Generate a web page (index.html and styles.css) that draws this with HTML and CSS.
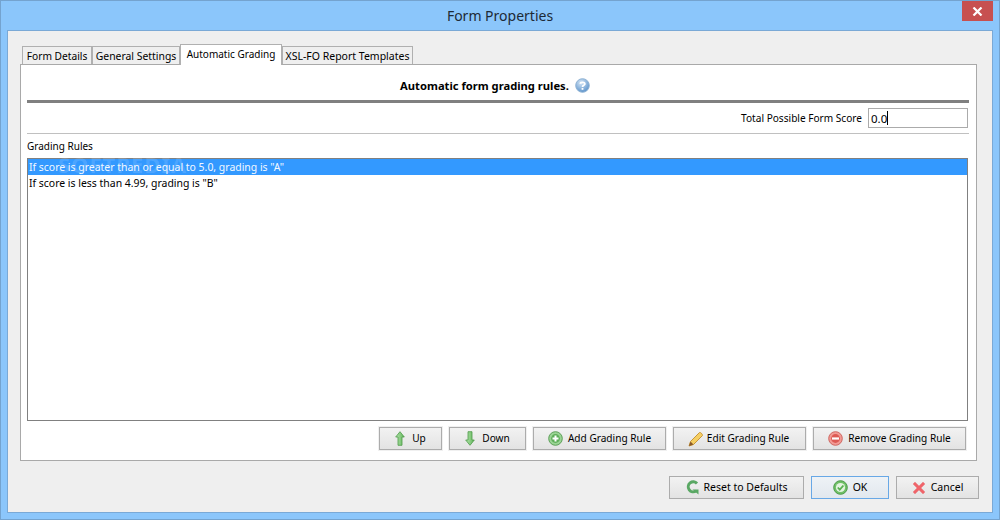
FILE: index.html
```html
<!DOCTYPE html>
<html lang="en">
<head>
<meta charset="utf-8">
<title>Form Properties</title>
<link rel="stylesheet" href="styles.css">
</head>
<body>
<div class="window">
  <header class="titlebar">
    <span class="title">Form Properties</span>
    <span class="close"><svg width="11" height="9" viewBox="0 0 11 9"><path d="M1.500 .5L9.500 8.500M9.500 .5L1.500 8.500" stroke="#fff" stroke-width="2.200" fill="none"/></svg></span>
  </header>
  <main class="client">
    <nav class="tabs">
      <div class="tab t-form">Form Details</div>
      <div class="tab t-general">General Settings</div>
      <div class="tab active">Automatic Grading</div>
      <div class="tab t-xsl">XSL-FO Report Templates</div>
    </nav>
    <section class="panel">
      <div class="heading">
        <strong>Automatic form grading rules.</strong>
        <svg class="help" width="15" height="15" viewBox="0 0 15 15"><defs><radialGradient id="hg" cx=".4" cy=".3" r=".8"><stop offset="0" stop-color="#d5e6f6"/><stop offset="1" stop-color="#4f8ac6"/></radialGradient></defs><circle cx="7.500" cy="7.500" r="6.800" fill="url(#hg)" stroke="#8fb2d4"/><path d="M5.300 5.800C5.400 3.900 9.900 3.800 9.900 6C9.900 7.400 7.500 7.300 7.500 9" fill="none" stroke="#fff" stroke-width="1.700"/><rect x="6.600" y="10" width="1.800" height="1.800" fill="#fff"/></svg>
      </div>
      <div class="rule-heavy"></div>
      <div class="score-row">
        <label class="score-label">Total Possible Form Score</label>
        <div class="score-input">0.0<span class="caret"></span></div>
      </div>
      <div class="rule-light"></div>
      <div class="list-label">Grading Rules</div>
      <div class="list">
        <div class="row selected">If score is greater than or equal to 5.0, grading is "A"<span class="watermark">SOFTPEDIA</span></div>
        <div class="row">If score is less than 4.99, grading is "B"</div>
      </div>
      <div class="actions">
        <button class="btn w-up"><svg width="10" height="15" viewBox="0 0 10 15"><defs><linearGradient id="ag" x1="0" x2="1" y1="0" y2="0"><stop offset="0" stop-color="#b5e6ae"/><stop offset="1" stop-color="#5fb358"/></linearGradient></defs><path d="M5 .7L9.300 6H7V14.300H3V6H.7Z" fill="url(#ag)" stroke="#4c9a48" stroke-width=".8"/></svg>Up</button>
        <button class="btn w-down"><svg width="10" height="15" viewBox="0 0 10 15"><path d="M5 14.300L9.300 9H7V.7H3V9H.7Z" fill="url(#ag)" stroke="#4c9a48" stroke-width=".8"/></svg>Down</button>
        <button class="btn w-add"><svg width="15" height="15" viewBox="0 0 15 15"><circle cx="7.500" cy="7.500" r="6.800" fill="#9ad494" stroke="#5c9f58"/><circle cx="7.500" cy="7.500" r="4.400" fill="#5fae5a"/><path d="M7.500 4.500V10.500M4.500 7.500H10.500" stroke="#fff" stroke-width="2"/></svg>Add Grading Rule</button>
        <button class="btn w-edit"><svg width="16" height="16" viewBox="0 0 16 16"><path d="M1 15L2.500 10.500L11.500 1.500C12.500 1 14.500 3 14.500 4.500L5.500 13.500Z" fill="#f5cf63" stroke="#c8963a"/><path d="M1 15L2.500 10.500L5.500 13.500Z" fill="#8a5a2b"/></svg>Edit Grading Rule</button>
        <button class="btn w-remove"><svg width="15" height="15" viewBox="0 0 15 15"><circle cx="7.500" cy="7.500" r="6.800" fill="#f29a94" stroke="#cf6660"/><circle cx="7.500" cy="7.500" r="4.400" fill="#dd5a54"/><path d="M4 7.500H11" stroke="#fff" stroke-width="2.200"/></svg>Remove Grading Rule</button>
      </div>
    </section>
    <footer class="footer">
      <button class="btn w-reset"><svg width="13" height="15" viewBox="0 0 13 15"><path d="M11 3.500A5 5 0 1 0 10 11" fill="none" stroke="#5aa864" stroke-width="3"/><path d="M6.500 9.500H12.500V14.500Z" fill="#5aa864"/></svg>Reset to Defaults</button>
      <button class="btn w-ok default"><svg width="15" height="15" viewBox="0 0 15 15"><circle cx="7.500" cy="7.500" r="6.800" fill="#6fc067" stroke="#4c9a48"/><circle cx="7.500" cy="7.500" r="4.600" fill="#e3f3e0"/><path d="M4.800 7.500L6.800 9.700L10.400 5.500" fill="none" stroke="#5ab053" stroke-width="1.800"/></svg>OK</button>
      <button class="btn w-cancel"><svg width="14" height="14" viewBox="0 0 14 14"><path d="M1 3L3 1L7 5L11 1L13 3L9 7L13 11L11 13L7 9L3 13L1 11L5 7Z" fill="#f0646a" stroke="#e8888c" stroke-width=".6"/></svg>Cancel</button>
    </footer>
  </main>
</div>
</body>
</html>
```

FILE: styles.css
```css
* { box-sizing: border-box; }
html, body { margin: 0; padding: 0; }
body { width: 1000px; height: 520px; overflow: hidden; font-family: "Noto Sans", "Liberation Sans", sans-serif; font-size: 10.5px; color: #000; }
.window { width: 1000px; height: 520px; background: #8bc6fb; border: 1px solid #74a3cf; padding: 0 6px 6px; display: flex; flex-direction: column; }
.titlebar { height: 29px; flex: none; display: flex; align-items: center; justify-content: center; position: relative; }
.title { font-size: 14px; color: #1d2a36; }
.close { position: absolute; top: 0; right: 0; width: 31px; height: 20px; background: #c75050; display: flex; align-items: center; justify-content: center; }
.client { flex: 1; background: #efefef; border: 1px solid #7aa9d6; padding: 13px 15px 0 12px; display: flex; flex-direction: column; }
.tabs { display: flex; height: 20px; flex: none; padding-left: 2px; align-items: flex-end; position: relative; z-index: 1; }
.tab { height: 18px; background: #efefef; border: 1px solid #b0b0b0; border-bottom: none; line-height: 18px; text-align: center; white-space: nowrap; }
.t-form { width: 70px; font-size: 10.2px; }
.t-general { width: 88px; font-size: 10.4px; }
.t-xsl { width: 131px; }
.tab.active { width: 102px; height: 21px; background: #fff; font-size: 10px; margin-bottom: -1px; }
.panel { height: 397px; flex: none; background: #fff; border: 1px solid #a9a9a9; padding: 0 7px 0 6px; display: flex; flex-direction: column; }
.heading { height: 35px; flex: none; display: flex; align-items: center; justify-content: center; gap: 6px; padding-top: 6px; padding-right: 6px; font-size: 11.2px; }
.rule-heavy { height: 3px; flex: none; background: #808080; }
.score-row { height: 30px; flex: none; display: flex; align-items: center; justify-content: flex-end; gap: 6px; padding-right: 1px; font-size: 10.1px; }
.score-input { width: 100px; height: 20px; border: 1px solid #ababab; padding-left: 2px; font-size: 11.5px; display: flex; align-items: center; }
.caret { width: 1px; height: 14px; background: #000; }
.rule-light { height: 1px; flex: none; background: #c0c0c0; }
.list-label { height: 24px; flex: none; line-height: 24px; font-size: 10px; }
.list { height: 263px; flex: none; width: 941px; border: 1px solid #808080; }
.row { height: 16px; line-height: 16px; padding-left: 1px; font-size: 10.45px; white-space: nowrap; position: relative; }
.row.selected { background: #3399ff; color: #f2f8ff; }
.watermark { position: absolute; left: 30px; top: -3px; font-size: 22px; letter-spacing: 1px; font-weight: 700; color: rgba(255,255,255,.13); line-height: 16px; }
.actions { display: flex; justify-content: flex-end; gap: 7px; margin-top: 6px; padding-right: 3px; font-size: 10.1px; }
.actions .btn { box-shadow: 0 0 0 1px #f0f0f0; }
.footer { display: flex; justify-content: flex-end; gap: 7px; margin-top: 15px; margin-right: -2px; }
.btn { height: 23px; border: 1px solid #acacac; background: linear-gradient(#f2f2f2, #e3e3e3); font: inherit; color: #000; display: flex; align-items: center; justify-content: center; gap: 5px; padding: 0 0 1px; }
.btn svg { position: relative; top: .5px; }
.btn.default { border-color: #68a8e6; background: linear-gradient(#eef2f6, #e2e8ee); }
.w-up { width: 63px; gap: 7px; } .w-down { width: 77px; gap: 7px; } .w-add { width: 133px; } .w-edit { width: 133px; gap: 3px; padding-right: 2px; } .w-remove { width: 153px; }
.w-reset { width: 135px; } .w-ok { width: 78px; } .w-cancel { width: 83px; }
```
